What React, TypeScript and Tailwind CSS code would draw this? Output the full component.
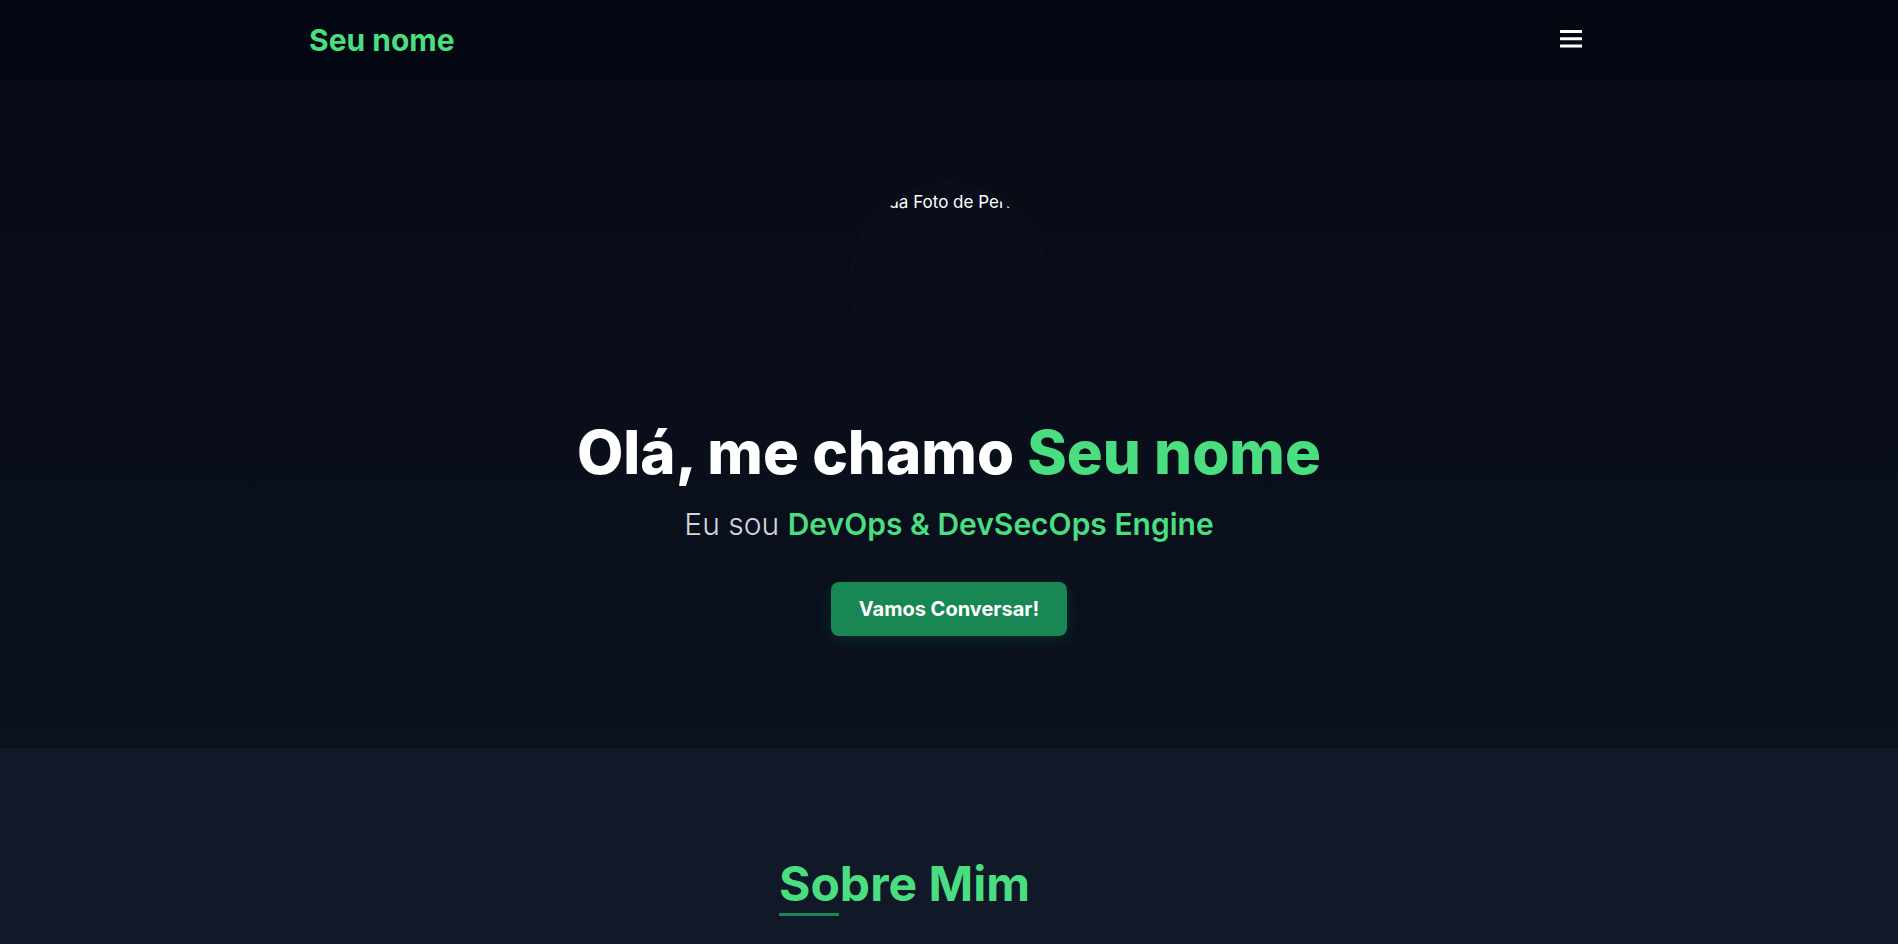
import React from 'react';

function MenuIcon() {
  return (
    <svg width="22" height="18" viewBox="0 0 22 18" fill="currentColor" aria-hidden="true">
      <rect x="0" y="0" width="22" height="3" rx="0.5" />
      <rect x="0" y="7.3" width="22" height="3" rx="0.5" />
      <rect x="0" y="14.6" width="22" height="3" rx="0.5" />
    </svg>
  );
}

export default function App() {
  return (
    <div className="min-h-screen bg-[#111827] text-white" style={{ fontFamily: 'Inter, "Noto Sans", sans-serif' }}>
      <header className="h-20 bg-[#030712]">
        <div className="max-w-7xl mx-auto h-full flex items-center justify-between">
          <a href="#" className="text-3xl font-bold text-[#4ade80]">
            Seu nome
          </a>
          <button className="text-white mr-[7px] mb-[2px]" aria-label="Menu">
            <MenuIcon />
          </button>
        </div>
      </header>

      <section className="bg-gradient-to-b from-[#070b15] to-[#0b111f] pt-[102px] pb-[112px]">
        <div className="flex flex-col items-center text-center">
          {/* foto de perfil (imagem quebrada, só o alt aparece) */}
          <div className="w-50 h-50 rounded-full border-4 border-[#0a0f1b] bg-[#090e1a] overflow-hidden mb-10">
            <p className="pt-[4px] text-[17px] leading-6 text-white whitespace-nowrap">Sua Foto de Perfil</p>
          </div>
          <h1 className="text-6xl leading-none font-extrabold text-white mb-6">
            Olá, me chamo <span className="text-[#4ade80]">Seu nome</span>
          </h1>
          <p className="text-3xl leading-9 font-light text-gray-300 mb-10">
            Eu sou <span className="font-semibold text-[#4ade80]">DevOps &amp; DevSecOps Engine</span>
          </p>
          <a
            href="#contato"
            className="inline-flex items-center h-[54px] px-7 rounded-lg bg-[#198754] text-xl font-bold text-white shadow-[0_4px_16px_rgba(25,135,84,0.22)]"
          >
            Vamos Conversar!
          </a>
        </div>
      </section>

      <section className="bg-[#111827] pt-28 pb-24">
        <div className="w-[340px] mx-auto">
          <h2 className="text-5xl leading-none font-bold text-[#4ade80]">Sobre Mim</h2>
          <div className="mt-[5px] h-[3px] w-15 bg-[#198754]" />
        </div>
      </section>
    </div>
  );
}
